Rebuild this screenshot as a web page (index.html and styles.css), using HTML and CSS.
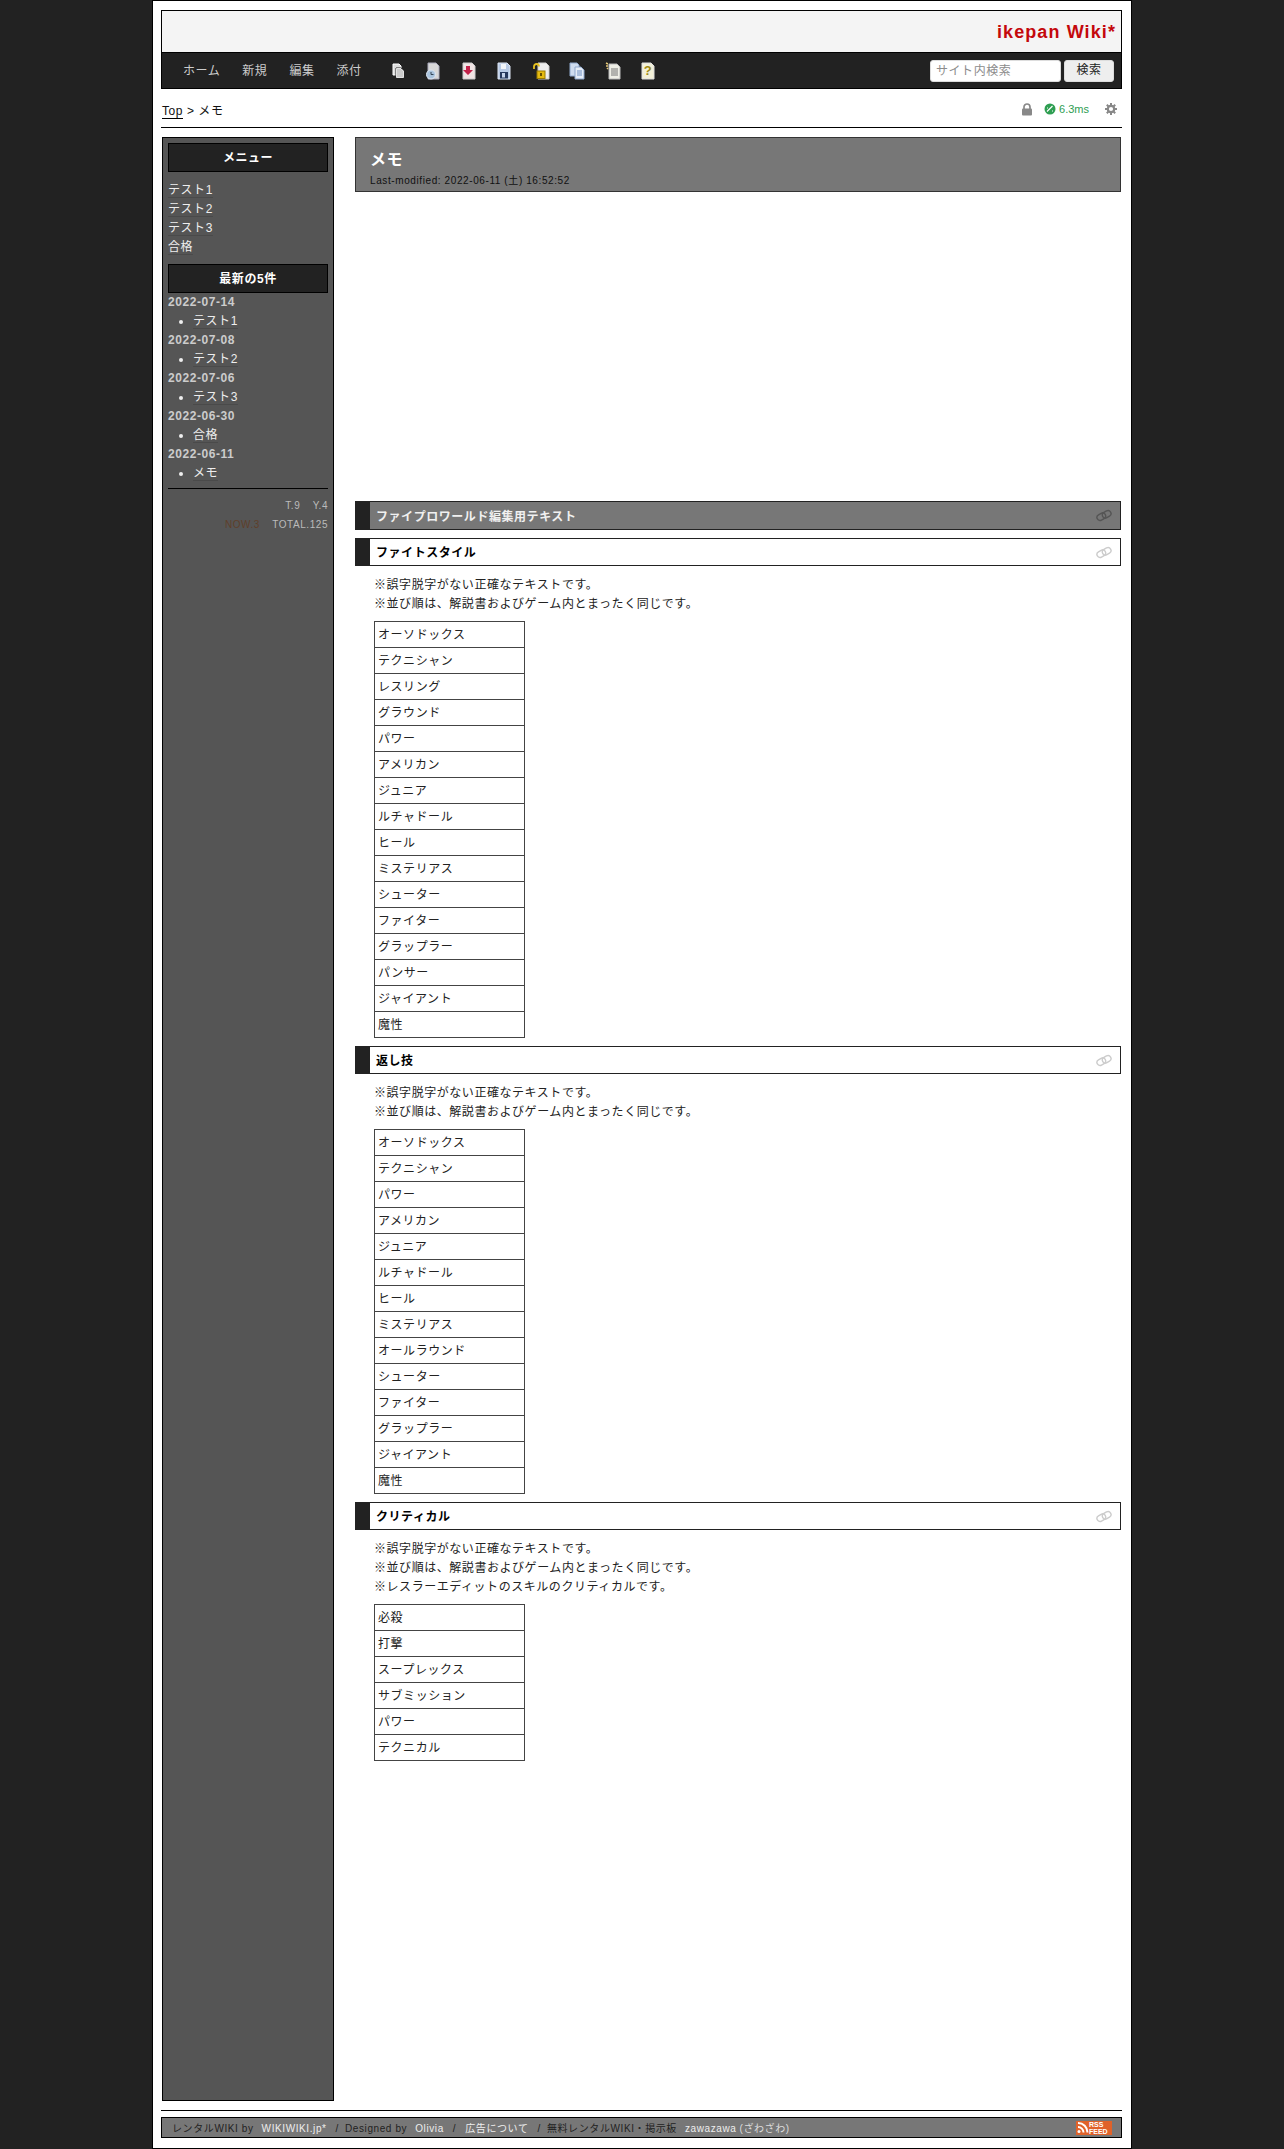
FILE: index.html
```html
<!DOCTYPE html>
<html lang="ja">
<head>
    <meta charset="UTF-8">
    <meta name="viewport" content="width=device-width, initial-scale=1.0">
    <title>メモ - ikepan Wiki*</title>
    <link rel="stylesheet" href="styles.css">
</head>
<body>
    <svg class="defs" width="0" height="0">
        <symbol id="chain" viewBox="0 0 16 13">
            <g fill="none" stroke="currentColor" stroke-width="1.4">
                <rect x="0.8" y="4.700" width="9" height="6" rx="3" transform="rotate(-30 5.3 7.700)"/>
                <rect x="6.2" y="2.300" width="9" height="6" rx="3" transform="rotate(-30 10.700 5.300)"/>
            </g>
        </symbol>
    </svg>

    <div class="wrapper">
        <header class="site-header">
            <div class="site-title">ikepan Wiki*</div>
            <nav class="navbar">
                <a href="#">ホーム</a>
                <a href="#">新規</a>
                <a href="#">編集</a>
                <a href="#">添付</a>
                <div class="tool-icons">
                    <svg width="16" height="18" viewBox="0 0 16 18">
                        <path d="M3 2h6l2 2v9H3z" fill="#ddd" stroke="#fff"/>
                        <path d="M6 6h5l3 3v7H6z" fill="#ccc" stroke="#222"/>
                        <path d="M6.500 6.500h4.500l2.500 2.500v6.500H6.500z" fill="none" stroke="#fff" stroke-width=".8"/>
                    </svg>
                    <svg width="16" height="18" viewBox="0 0 16 18">
                        <path d="M3 1h8l3 3v13H3z" fill="#d8d8d8" stroke="#aab"/>
                        <circle cx="6" cy="12.500" r="4.500" fill="#a9c3dd" stroke="#dfe8f2"/>
                        <path d="M6 10v2.500h2.500" fill="none" stroke="#345" stroke-width="1"/>
                    </svg>
                    <svg width="16" height="18" viewBox="0 0 16 18">
                        <path d="M2 1h9l3 3v13H2z" fill="#f0e4e4" stroke="#ccc"/>
                        <path d="M5 4h4v4h3l-5 5-5-5h3z" fill="#c3224a"/>
                    </svg>
                    <svg width="16" height="18" viewBox="0 0 16 18">
                        <path d="M2 1h9l3 3v13H2z" fill="#b9cbe6" stroke="#dde6f4"/>
                        <rect x="5" y="2" width="5" height="5" fill="#f2f5fa"/>
                        <rect x="4" y="10" width="8" height="6.500" fill="#26385c"/>
                        <rect x="6" y="11" width="3" height="4.500" fill="#c5d3ea"/>
                    </svg>
                    <svg width="18" height="18" viewBox="0 0 18 18">
                        <path d="M6 1h8l3 3v13H6z" fill="#eee" stroke="#ccc"/>
                        <path d="M2 7V4.500a2.500 2.500 0 0 1 5 0" fill="none" stroke="#e6c020" stroke-width="1.800"/>
                        <rect x="5" y="9" width="8" height="7.500" fill="#e6bb10" stroke="#9a7a00"/>
                        <rect x="8" y="11" width="2" height="3" fill="#6a5200"/>
                    </svg>
                    <svg width="16" height="18" viewBox="0 0 16 18">
                        <path d="M1 1h7l2 2v11H1z" fill="#cfdcef" stroke="#8fa8cc"/>
                        <path d="M6 5h6l3 3v9H6z" fill="#e6edf7" stroke="#8fa8cc"/>
                        <path d="M8 9h5M8 11h5M8 13h5" stroke="#6f8fc0"/>
                    </svg>
                    <svg width="16" height="18" viewBox="0 0 16 18">
                        <path d="M4 2h8l3 3v12H4z" fill="#efefe6" stroke="#bbb"/>
                        <path d="M6 7h7M6 9h7M6 11h7M6 13h7" stroke="#777"/>
                        <path d="M1 1l2 1M1 4h2M3 6l-1 1" stroke="#e6c878" stroke-width="1.500"/>
                    </svg>
                    <svg width="16" height="18" viewBox="0 0 16 18">
                        <path d="M2 1h9l3 3v13H2z" fill="#f3f0d8" stroke="#ddd"/>
                        <text class="help-mark" x="8" y="13" text-anchor="middle">?</text>
                    </svg>
                </div>
                <form class="search">
                    <input type="text" placeholder="サイト内検索">
                    <button type="button">検索</button>
                </form>
            </nav>
        </header>

        <div class="crumb-row">
            <div class="crumbs"><a href="#">Top</a> &gt; メモ</div>
            <div class="page-status">
                <svg class="lock-icon" width="12" height="13" viewBox="0 0 12 13" fill="#888">
                    <path d="M3 6V4a3 3 0 0 1 6 0v2" fill="none" stroke="#888" stroke-width="1.700"/>
                    <rect x="1" y="5.500" width="10" height="7" rx="1"/>
                </svg>
                <span class="speed">
                    <svg width="12" height="12" viewBox="0 0 12 12">
                        <circle cx="6" cy="6" r="5.500" fill="#2e9e52"/>
                        <path d="M3 8.500L8.500 3M3 5h1M8 8h1" stroke="#fff" stroke-width="1.200"/>
                    </svg>
                    6.3ms
                </span>
                <svg width="12" height="12" viewBox="0 0 12 12">
                    <circle cx="6" cy="6" r="3.200" fill="none" stroke="#888" stroke-width="2.200"/>
                    <path d="M6 0v2.500M6 9.500V12M0 6h2.500M9.500 6H12M1.800 1.800l1.700 1.700M8.500 8.500l1.700 1.700M10.200 1.800L8.500 3.500M3.500 8.500l-1.700 1.700" stroke="#888" stroke-width="2"/>
                </svg>
            </div>
        </div>

        <div class="columns">
            <aside class="side">
                <h4 class="side-title">メニュー</h4>
                <ul class="menu-list">
                    <li><a href="#">テスト1</a></li>
                    <li><a href="#">テスト2</a></li>
                    <li><a href="#">テスト3</a></li>
                    <li><a href="#">合格</a></li>
                </ul>
                <h4 class="side-title recent-title">最新の5件</h4>
                <div class="date">2022-07-14</div>
                <ul class="recent-list"><li><a href="#">テスト1</a></li></ul>
                <div class="date">2022-07-08</div>
                <ul class="recent-list"><li><a href="#">テスト2</a></li></ul>
                <div class="date">2022-07-06</div>
                <ul class="recent-list"><li><a href="#">テスト3</a></li></ul>
                <div class="date">2022-06-30</div>
                <ul class="recent-list"><li><a href="#">合格</a></li></ul>
                <div class="date">2022-06-11</div>
                <ul class="recent-list"><li><a href="#">メモ</a></li></ul>
                <div class="counter">
                    <div>T.9 <span class="counter-gap">Y.4</span></div>
                    <div><span class="counter-now">NOW.3</span> <span class="counter-gap">TOTAL.125</span></div>
                </div>
            </aside>

            <main class="main">
                <div class="page-head">
                    <h1>メモ</h1>
                    <div class="modified">Last-modified: 2022-06-11 (土) 16:52:52</div>
                </div>
                <div class="ad-space"></div>

                <h2 class="bar bar-dark"><span>ファイプロワールド編集用テキスト</span><svg class="anchor"><use href="#chain"/></svg></h2>

                <h3 class="bar"><span>ファイトスタイル</span><svg class="anchor"><use href="#chain"/></svg></h3>
                <p class="note">※誤字脱字がない正確なテキストです。<br>※並び順は、解説書およびゲーム内とまったく同じです。</p>
                <table class="wiki-table">
                    <tr><td>オーソドックス</td></tr>
                    <tr><td>テクニシャン</td></tr>
                    <tr><td>レスリング</td></tr>
                    <tr><td>グラウンド</td></tr>
                    <tr><td>パワー</td></tr>
                    <tr><td>アメリカン</td></tr>
                    <tr><td>ジュニア</td></tr>
                    <tr><td>ルチャドール</td></tr>
                    <tr><td>ヒール</td></tr>
                    <tr><td>ミステリアス</td></tr>
                    <tr><td>シューター</td></tr>
                    <tr><td>ファイター</td></tr>
                    <tr><td>グラップラー</td></tr>
                    <tr><td>パンサー</td></tr>
                    <tr><td>ジャイアント</td></tr>
                    <tr><td>魔性</td></tr>
                </table>

                <h3 class="bar"><span>返し技</span><svg class="anchor"><use href="#chain"/></svg></h3>
                <p class="note">※誤字脱字がない正確なテキストです。<br>※並び順は、解説書およびゲーム内とまったく同じです。</p>
                <table class="wiki-table">
                    <tr><td>オーソドックス</td></tr>
                    <tr><td>テクニシャン</td></tr>
                    <tr><td>パワー</td></tr>
                    <tr><td>アメリカン</td></tr>
                    <tr><td>ジュニア</td></tr>
                    <tr><td>ルチャドール</td></tr>
                    <tr><td>ヒール</td></tr>
                    <tr><td>ミステリアス</td></tr>
                    <tr><td>オールラウンド</td></tr>
                    <tr><td>シューター</td></tr>
                    <tr><td>ファイター</td></tr>
                    <tr><td>グラップラー</td></tr>
                    <tr><td>ジャイアント</td></tr>
                    <tr><td>魔性</td></tr>
                </table>

                <h3 class="bar"><span>クリティカル</span><svg class="anchor"><use href="#chain"/></svg></h3>
                <p class="note">※誤字脱字がない正確なテキストです。<br>※並び順は、解説書およびゲーム内とまったく同じです。<br>※レスラーエディットのスキルのクリティカルです。</p>
                <table class="wiki-table">
                    <tr><td>必殺</td></tr>
                    <tr><td>打撃</td></tr>
                    <tr><td>スープレックス</td></tr>
                    <tr><td>サブミッション</td></tr>
                    <tr><td>パワー</td></tr>
                    <tr><td>テクニカル</td></tr>
                </table>
            </main>
        </div>

        <footer class="site-footer">
            <div class="footer-box">
                <div class="footer-text">
                    レンタルWIKI by<a href="#">WIKIWIKI.jp*</a><span class="sep">/</span>Designed by<a href="#">Olivia</a><span class="sep sep-tight">/</span><a href="#">広告について</a><span class="sep">/</span>無料レンタルWIKI・掲示板<a href="#">zawazawa</a><span class="footer-kana">(ざわざわ)</span>
                </div>
                <div class="rss">
                    <svg width="13" height="14" viewBox="0 0 13 13" fill="none" stroke="#fff" stroke-width="2">
                        <circle cx="3" cy="10" r="1.500" fill="#fff" stroke="none"/>
                        <path d="M2 5.500a5.500 5.500 0 0 1 5.500 5.500M2 1.500A9.500 9.500 0 0 1 11.500 11"/>
                    </svg>
                    <span class="rss-label">RSS<br>FEED</span>
                </div>
            </div>
        </footer>
    </div>
</body>
</html>
```

FILE: styles.css
```css
html, body {
    margin: 0;
    padding: 0;
}
body {
    background: #222;
    color: #222;
    font-family: "Liberation Sans", "Noto Sans CJK JP", sans-serif;
    font-size: 12px;
    line-height: 19px;
    letter-spacing: 0.55px;
}
a {
    color: inherit;
    text-decoration: none;
}
.defs {
    position: absolute;
}
.wrapper {
    width: 980px;
    height: 2149px;
    margin: 0 auto;
    padding: 9px 9px 10px 8px;
    box-sizing: border-box;
    background: #fff;
    border: 1px solid #000;
    display: flex;
    flex-direction: column;
}

/* header */
.site-header {
    border: 1px solid #000;
}
.site-title {
    height: 42px;
    box-sizing: border-box;
    padding: 8px 5px 0 0;
    background: #f4f4f4;
    border-bottom: 1px solid #000;
    color: #c4080c;
    font-size: 18px;
    font-weight: bold;
    line-height: 26px;
    letter-spacing: 1.1px;
    text-align: right;
}
.navbar {
    height: 35px;
    display: flex;
    align-items: center;
    gap: 22px;
    padding: 0 7px 0 21px;
    background: #222;
    color: #ccc;
}
.navbar > a {
    padding-top: 2px;
}
.tool-icons {
    display: flex;
    align-items: center;
    gap: 19.500px;
    margin-left: 6px;
}
.help-mark {
    fill: #a08a10;
    font-size: 13px;
    font-weight: bold;
}
.search {
    margin-left: auto;
    display: flex;
    gap: 3px;
}
.search input {
    width: 131px;
    height: 22px;
    box-sizing: border-box;
    padding: 0 5px;
    border: 1px solid #ddd;
    border-radius: 3px;
    font: inherit;
    letter-spacing: inherit;
}
.search input::placeholder {
    color: #8c8c8c;
}
.search button {
    width: 50px;
    height: 22px;
    padding: 0;
    background: #eee;
    border: 1px solid #ddd;
    border-radius: 3px;
    color: #222;
    font: inherit;
    letter-spacing: inherit;
}

/* breadcrumb */
.crumb-row {
    height: 39px;
    box-sizing: border-box;
    display: flex;
    justify-content: space-between;
    align-items: center;
    padding: 6px 0 0 1px;
    border-bottom: 1px solid #000;
    color: #111;
}
.crumbs a {
    border-bottom: 1px solid #000;
}
.page-status {
    display: flex;
    align-items: center;
    margin-top: -4px;
    padding-right: 5px;
    gap: 16px;
}
.lock-icon {
    margin-right: -5px;
}
.speed {
    display: flex;
    align-items: center;
    gap: 3px;
    color: #2e9e52;
    font-size: 11px;
    letter-spacing: 0;
}

/* columns */
.columns {
    flex: 1;
    display: grid;
    grid-template-columns: 172px 1fr;
    gap: 21px;
    margin: 9px 1px 0;
}
.side {
    box-sizing: border-box;
    height: 1964px;
    padding: 5px;
    background: #555;
    border: 1px solid #000;
    color: #eee;
}
.side-title {
    margin: 0 0 9px;
    height: 29px;
    box-sizing: border-box;
    border: 1px solid #000;
    background: #222;
    color: #fff;
    font-size: 12px;
    line-height: 29px;
    text-align: center;
}
.recent-title {
    margin: 7px 0 0;
}
.menu-list {
    margin: 0;
    padding: 0;
    list-style: none;
}
.side a {
    border-bottom: 1px solid #4a4a4a;
}
.date {
    color: #ccc;
    font-weight: bold;
}
.recent-list {
    margin: 0;
    padding: 0 0 0 25px;
    list-style: disc;
}
.counter {
    margin-top: 5px;
    padding-top: 7px;
    border-top: 1px solid #000;
    color: #bbb;
    font-size: 10px;
    text-align: right;
}
.counter-gap {
    margin-left: 9px;
}
.counter-now {
    color: #5f3f2a;
}

/* main */
.page-head {
    height: 55px;
    box-sizing: border-box;
    padding: 11px 14px 0;
    background: #777;
    border: 1px solid #333;
    color: #fff;
}
.page-head h1 {
    margin: 0;
    font-size: 16px;
    line-height: 22px;
}
.modified {
    margin-top: 1px;
    color: #111;
    font-size: 10px;
    line-height: 18px;
    letter-spacing: 0.6px;
}
.ad-space {
    height: 309px;
}
.bar {
    display: flex;
    justify-content: space-between;
    align-items: center;
    margin: 0;
    height: 28px;
    box-sizing: border-box;
    padding: 0 8px 0 6px;
    background: #fff;
    border: 1px solid #222;
    border-left: 15px solid #222;
    color: #000;
    font-size: 12px;
}
.bar span {
    padding-top: 3px;
}
.bar-dark {
    height: 29px;
    margin-bottom: 8px;
    background: #777;
    color: #f0f0f0;
}
.anchor {
    width: 16px;
    height: 13px;
    color: #ccc;
}
.bar-dark .anchor {
    color: #555;
}
.note {
    margin: 10px 0 7px 19px;
}
.wiki-table {
    margin: 0 0 8px 19px;
    width: 151px;
    border-collapse: collapse;
}
.wiki-table td {
    padding: 4px 3px 2px;
    border: 1px solid #444;
}

/* footer */
.site-footer {
    height: 28px;
    box-sizing: border-box;
    padding-top: 6px;
    border-top: 1px solid #000;
}
.footer-box {
    height: 21px;
    box-sizing: border-box;
    display: flex;
    justify-content: space-between;
    padding: 0 9px 0 10px;
    background: #777;
    border: 1px solid #000;
}
.footer-text {
    color: #222;
    font-size: 10px;
    line-height: 21px;
    letter-spacing: 0.6px;
    white-space: nowrap;
}
.footer-text a {
    margin: 0 9px 0 8px;
    color: #eee;
}
.footer-text a:last-of-type {
    margin-right: 3px;
}
.sep {
    margin-right: 6px;
}
.sep-tight {
    margin-right: 1px;
}
.footer-kana {
    color: #ddd;
}
.rss {
    display: flex;
    height: 14px;
    margin-top: 3px;
    background: #e0622a;
}
.rss-label {
    display: block;
    width: 23px;
    color: #fff;
    font-size: 7px;
    font-weight: bold;
    line-height: 7px;
    letter-spacing: 0;
}
```
